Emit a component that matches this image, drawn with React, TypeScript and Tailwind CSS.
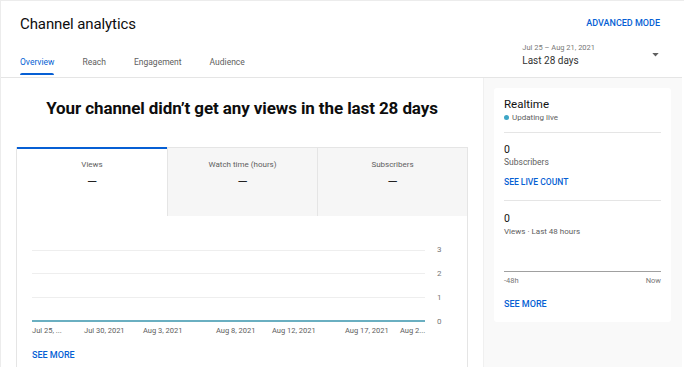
export default function App() {
  const xLabels = [
    { left: 0, text: "Jul 25, ..." },
    { left: 52, text: "Jul 30, 2021" },
    { left: 111, text: "Aug 3, 2021" },
    { left: 184, text: "Aug 8, 2021" },
    { left: 240, text: "Aug 12, 2021" },
    { left: 313, text: "Aug 17, 2021" },
    { left: 368, text: "Aug 2..." },
  ];

  return (
    <div className="w-[684px] h-[367px] overflow-hidden bg-white border-l border-t border-[#ececec] flex flex-col font-['Roboto',sans-serif] text-[#0d0d0d]">
      {/* header */}
      <div className="h-[77px] shrink-0 border-b border-[#e5e5e5] flex justify-between mr-[2px]">
        <div className="pl-[19px] flex flex-col">
          <h1 className="pt-[12px] text-[15px] leading-[22px] tracking-[-0.1px]">Channel analytics</h1>
          <div className="mt-[21px] flex gap-[28px] text-[8.5px] leading-[12px] text-[#606060]">
            <div className="flex flex-col items-center">
              <span className="text-[#065fd4]">Overview</span>
              <div className="mt-[5px] h-[2px] w-full bg-[#065fd4] rounded-t" />
            </div>
            <span>Reach</span>
            <span>Engagement</span>
            <span>Audience</span>
          </div>
        </div>
        <div className="pr-[22px] flex flex-col items-end">
          <span className="pt-[16px] text-[9px] leading-[12px] font-medium text-[#065fd4]">ADVANCED MODE</span>
          <div className="mt-[13px] flex items-center gap-[57px]">
            <div className="flex flex-col">
              <span className="text-[7.5px] leading-[11px] text-[#777]">Jul 25 – Aug 21, 2021</span>
              <span className="mt-[1px] text-[10px] leading-[13px] text-[#333]">Last 28 days</span>
            </div>
            <svg width="7" height="4" viewBox="0 0 8 5" className="mr-[1px]">
              <path d="M0 0 L8 0 L4 4.5 Z" fill="#606060" />
            </svg>
          </div>
        </div>
      </div>

      {/* body */}
      <div className="flex-1 flex min-h-0 mr-[2px]">
        {/* main */}
        <div className="w-[482px] shrink-0 flex flex-col">
          <h2 className="pt-[19px] text-center text-[17px] leading-[22px] font-bold tracking-[-0.1px]">
            Your channel didn’t get any views in the last 28 days
          </h2>
          <div className="mt-[28px] ml-[15px] w-[452px] flex-1 border-x border-[#e5e5e5] flex flex-col">
            <div className="grid grid-cols-3 h-[69px]">
              <div className="border-t-2 border-[#065fd4] bg-white flex flex-col items-center">
                <span className="pt-[10px] text-[8px] leading-[11px] text-[#606060]">Views</span>
                <span className="mt-[4px] text-[13px] leading-[16px] text-[#222]">—</span>
              </div>
              <div className="border-t border-l border-[#e5e5e5] bg-[#f6f6f6] flex flex-col items-center">
                <span className="pt-[11px] text-[8px] leading-[11px] text-[#606060]">Watch time (hours)</span>
                <span className="mt-[4px] text-[13px] leading-[16px] text-[#222]">—</span>
              </div>
              <div className="border-t border-l border-[#e5e5e5] bg-[#f6f6f6] flex flex-col items-center">
                <span className="pt-[11px] text-[8px] leading-[11px] text-[#606060]">Subscribers</span>
                <span className="mt-[4px] text-[13px] leading-[16px] text-[#222]">—</span>
              </div>
            </div>

            {/* chart */}
            <div className="pl-[15px] pt-[34px] flex">
              <div className="w-[393px] flex flex-col">
                <div className="h-[72px] flex flex-col justify-between">
                  <div className="h-px bg-[#eeeeee]" />
                  <div className="h-px bg-[#eeeeee]" />
                  <div className="h-px bg-[#eeeeee]" />
                  <div className="h-[2px] bg-[#6aafc1]" />
                </div>
                <div className="relative h-[14px] mt-[3px] text-[7.5px] leading-[12px] text-[#606060]">
                  {xLabels.map((l) => (
                    <span key={l.text} className="absolute top-0 whitespace-nowrap" style={{ left: l.left }}>
                      {l.text}
                    </span>
                  ))}
                </div>
              </div>
              <div className="ml-[12px] mt-[-5px] h-[82px] flex flex-col justify-between text-[8px] leading-[10px] text-[#777]">
                <span>3</span>
                <span>2</span>
                <span>1</span>
                <span>0</span>
              </div>
            </div>
            <span className="pl-[15px] mt-[10px] text-[9px] leading-[12px] font-medium text-[#065fd4]">SEE MORE</span>
          </div>
        </div>

        {/* sidebar */}
        <div className="flex-1 bg-[#f9f9f9] border-l border-[#f0f0f0] pl-[10px] pr-[11px] pt-[10px]">
          <div className="bg-white rounded-[3px] px-[10px] pt-[9px] pb-[12px] flex flex-col">
            <span className="text-[11.5px] leading-[14px] text-[#111]">Realtime</span>
            <div className="mt-[1px] flex items-center gap-[3px]">
              <span className="w-[5px] h-[5px] rounded-full bg-[#3ea6c6]" />
              <span className="text-[8px] leading-[11px] text-[#606060]">Updating live</span>
            </div>
            <div className="mt-[9px] h-px bg-[#e5e5e5]" />
            <span className="mt-[10px] text-[10.5px] leading-[13px] text-[#111]">0</span>
            <span className="mt-[1px] text-[8.5px] leading-[11px] text-[#606060]">Subscribers</span>
            <span className="mt-[8px] text-[8.5px] leading-[12px] font-medium text-[#065fd4]">SEE LIVE COUNT</span>
            <div className="mt-[12px] h-px bg-[#e5e5e5]" />
            <span className="mt-[11px] text-[10.5px] leading-[13px] text-[#111]">0</span>
            <span className="mt-[1px] text-[8px] leading-[11px] text-[#606060]">Views · Last 48 hours</span>
            <div className="mt-[34px] h-px bg-[#a0a0a0]" />
            <div className="mt-[3px] flex justify-between text-[7.5px] leading-[11px] text-[#777]">
              <span>-48h</span>
              <span>Now</span>
            </div>
            <span className="mt-[12px] text-[9px] leading-[12px] font-medium text-[#065fd4]">SEE MORE</span>
          </div>
        </div>
      </div>
    </div>
  );
}
